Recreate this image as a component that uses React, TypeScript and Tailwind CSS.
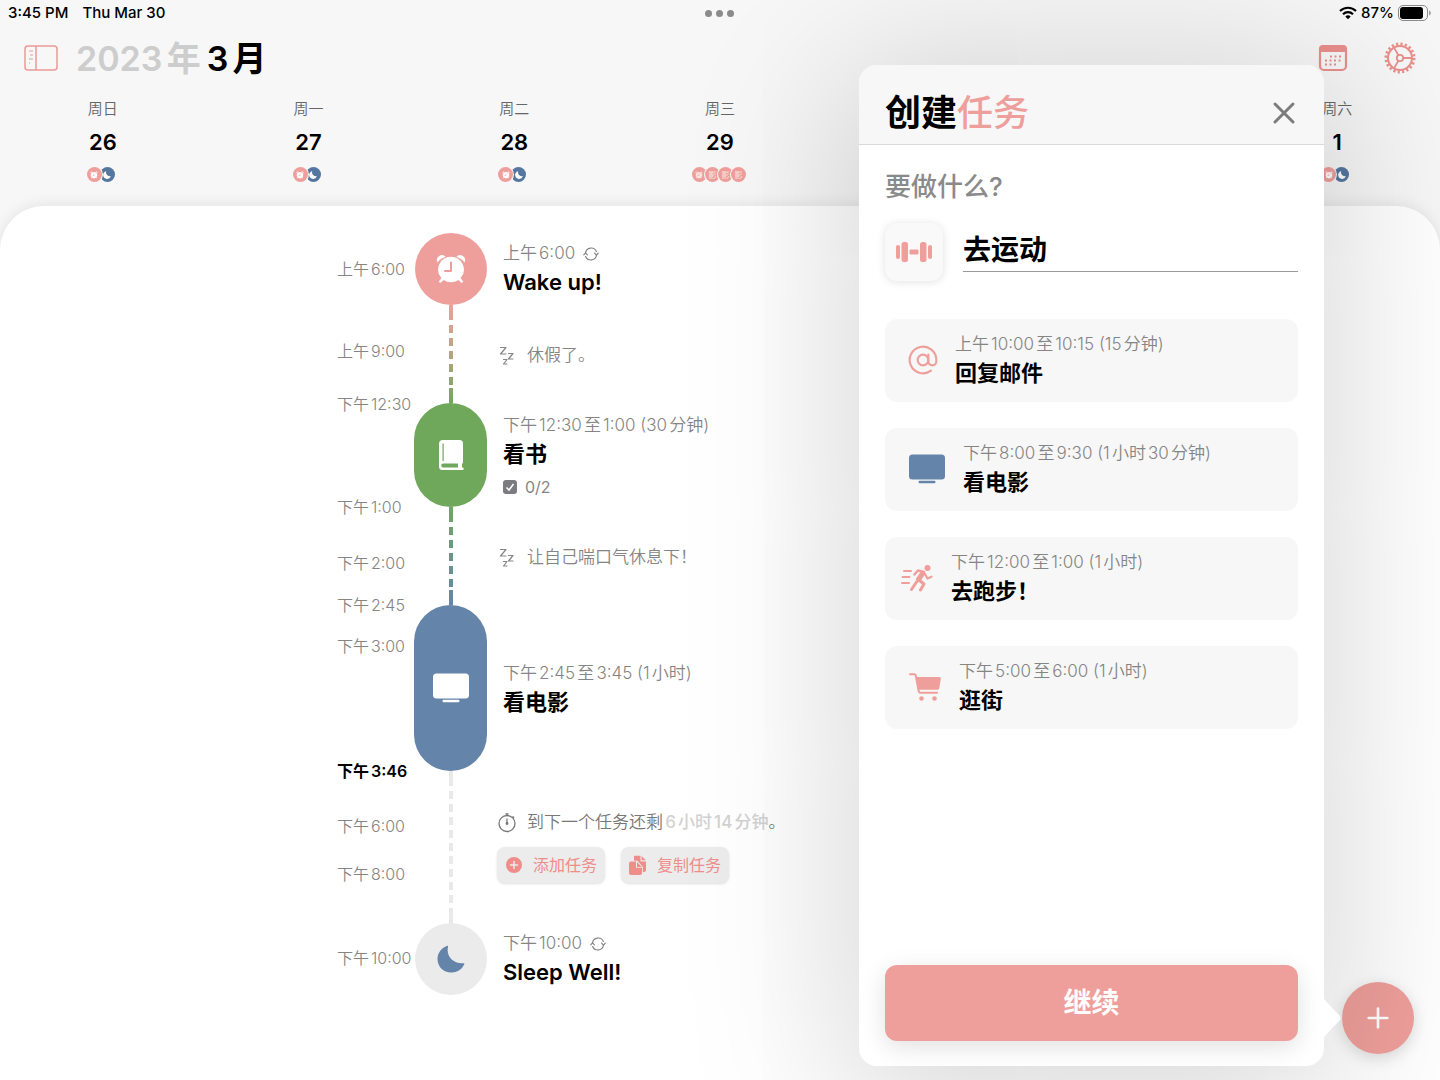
import type { ReactNode } from "react";
import { useState } from "react";
import { AtSign, Plus, X } from "lucide-react";

type IconProps = { className?: string };

function AlarmIcon({ className }: IconProps) {
  return (
    <svg viewBox="0 0 32 32" className={className} fill="currentColor" aria-hidden="true">
      <path d="M2.5 9.5a5 5 0 0 1 8.2-5.6 14 14 0 0 0-8.2 5.6zM29.5 9.5a5 5 0 0 0-8.2-5.6 14 14 0 0 1 8.2 5.6z" />
      <path
        fillRule="evenodd"
        d="M16 3.8a12.8 12.8 0 0 1 9.6 21.3l2 2.6a1.2 1.2 0 0 1-1.9 1.6l-2.2-2.4a12.8 12.8 0 0 1-15 0l-2.2 2.4a1.2 1.2 0 0 1-1.9-1.6l2-2.6A12.8 12.8 0 0 1 16 3.8zM15 9.5v7.5h-5a1 1 0 0 0 0 2h6a1 1 0 0 0 1-1V9.5a1 1 0 0 0-2 0z"
      />
    </svg>
  );
}

function BookIcon({ className }: IconProps) {
  return (
    <svg viewBox="0 0 26 32" className={className} fill="currentColor" aria-hidden="true">
      <path
        fillRule="evenodd"
        d="M5 1h16.5a3.500 3.500 0 0 1 3.500 3.500v18.500c0 .9-.5 1.500-1 2v3.500h.5a1.200 1.200 0 0 1 0 2.500H4.500A3.500 3.500 0 0 1 1 27.500V5a4 4 0 0 1 4-4zM4.500 4.500v17.500h1.200V4.500zM5.200 24.500a2 2 0 0 0 0 4H20v-4z"
      />
    </svg>
  );
}

function TvIcon({ className }: IconProps) {
  return (
    <svg viewBox="0 0 36 30" className={className} fill="currentColor" aria-hidden="true">
      <rect x="0" y="0.5" width="36" height="25" rx="3.5" />
      <rect x="9.5" y="26.8" width="17" height="2.4" rx="1.2" />
    </svg>
  );
}

function MoonIcon({ className }: IconProps) {
  return (
    <svg viewBox="0 0 28 28" className={className} fill="currentColor" aria-hidden="true">
      <path d="M10.3.8c.5-.3 1 .1.8.7-2.2 7.800 3.400 17.300 15.500 16.700.7 0 1 .5.700 1.100A13.600 13.600 0 0 1 14 27.600C6.500 27.600.5 21.600.5 14 .5 7.900 4.600 2.900 10.300.8z" />
    </svg>
  );
}

function DumbbellIcon({ className }: IconProps) {
  return (
    <svg viewBox="0 0 36 22" className={className} fill="currentColor" aria-hidden="true">
      <rect x="0" y="4" width="4" height="14" rx="2" />
      <rect x="5.5" y="1" width="6.5" height="20" rx="2.5" />
      <rect x="13.5" y="8.500" width="9" height="5" rx="1" />
      <rect x="24" y="1" width="6.5" height="20" rx="2.5" />
      <rect x="32" y="4" width="4" height="14" rx="2" />
    </svg>
  );
}

function RunIcon({ className }: IconProps) {
  return (
    <svg viewBox="0 0 32 28" className={className} fill="none" stroke="currentColor" strokeLinecap="round" strokeLinejoin="round" aria-hidden="true">
      <path d="M3 7h7M1.500 13h7M1 19h7" strokeWidth="2" />
      <circle cx="26.500" cy="4" r="3" fill="currentColor" stroke="none" />
      <path d="M13.500 10.500l3.500-4 6 1.500" strokeWidth="2.400" />
      <path d="M21.500 9.500l-4 6" strokeWidth="5" />
      <path d="M24 10l2.500 4.500 4-1.800" strokeWidth="2.200" />
      <path d="M15.500 18l-5 7.500M18.500 16.500l4.500 3.500-3.500 6" strokeWidth="3" />
    </svg>
  );
}

function CartIcon({ className }: IconProps) {
  return (
    <svg viewBox="0 0 32 28" className={className} fill="currentColor" aria-hidden="true">
      <path
        d="M1 1.200h4.500c.7 0 1 .4 1.200 1l3 16c.2 1 .8 1.600 1.800 1.600H28"
        fill="none"
        stroke="currentColor"
        strokeWidth="2"
        strokeLinecap="round"
      />
      <path d="M7.500 4h22.800c1.200 0 1.700.8 1.500 1.900l-1.500 9c-.2 1.100-.9 1.800-2 1.800H9.700z" />
      <circle cx="12.500" cy="25.500" r="2.300" />
      <circle cx="25.500" cy="25.500" r="2.300" />
    </svg>
  );
}

function RepeatIcon() {
  return (
    <svg viewBox="0 0 16 14" className="h-[14px] w-4" fill="none" stroke="currentColor" strokeWidth="1.2" strokeLinecap="round" strokeLinejoin="round" aria-hidden="true">
      <path d="M2.500 6a5.700 5.700 0 0 1 10.900-1.500M13.500 8a5.700 5.700 0 0 1-10.900 1.500" />
      <path d="M.8 7.800l1.700-2 1.900 2M11.600 6.200l1.900 2 1.700-2" />
    </svg>
  );
}

function SleepIcon() {
  return (
    <svg viewBox="0 0 16 20" className="h-5 w-4" fill="none" stroke="currentColor" strokeWidth="1.2" strokeLinecap="round" strokeLinejoin="round" aria-hidden="true">
      <path d="M1.500 1.500h5.500L1.500 8H7M9.500 7.500H14l-4.500 5.500H14M4.500 13.500H8l-3.500 4.500H8" />
    </svg>
  );
}

function StopwatchIcon() {
  return (
    <svg viewBox="0 0 20 20" className="size-5" fill="none" stroke="currentColor" strokeWidth="1.3" strokeLinecap="round" aria-hidden="true">
      <circle cx="10" cy="10.500" r="8" />
      <path d="M10 2.500V.9M9 .9h2M10 6v4.500M16 3.800l.8.8" />
      <circle cx="10" cy="10.500" r="0.800" fill="currentColor" />
    </svg>
  );
}

function SidebarIcon() {
  return (
    <svg viewBox="0 0 34 26" className="h-[26px] w-[34px]" fill="none" stroke="currentColor" strokeWidth="1.5" aria-hidden="true">
      <rect x="1" y="1" width="32" height="24" rx="3" />
      <path d="M12 1v24" />
      <path d="M5 6h4M6 10h3M5 14h4M5 18h1" strokeWidth="1.2" />
    </svg>
  );
}

function CalendarIcon() {
  return (
    <svg viewBox="0 0 30 28" className="h-7 w-[30px]" aria-hidden="true">
      <rect x="2" y="2" width="26" height="24" rx="4" fill="none" stroke="currentColor" strokeWidth="2.200" />
      <path d="M1 8V5a4 4 0 0 1 4-4h20a4 4 0 0 1 4 4v3z" fill="currentColor" />
      <path
        d="M12 12.500h12M7 16.500h17M7 20.500h13"
        stroke="currentColor"
        strokeWidth="2"
        strokeDasharray="2 2.500"
      />
    </svg>
  );
}

function GearIcon() {
  return (
    <svg viewBox="0 0 32 32" className="size-8" fill="none" stroke="currentColor" aria-hidden="true">
      <circle cx="16" cy="16" r="14" strokeWidth="3" strokeDasharray="2.199 2.199" />
      <circle cx="16" cy="16" r="12" strokeWidth="2" />
      <circle cx="16" cy="16" r="3.200" strokeWidth="1.800" />
      <path d="M19.200 16H28M14.400 13.200 10 5.600M14.400 18.800 10 26.400" strokeWidth="1.800" />
    </svg>
  );
}

function WifiIcon() {
  return (
    <svg viewBox="0 0 18 14" className="h-[14px] w-[18px]" fill="none" stroke="currentColor" strokeWidth="2.200" aria-hidden="true">
      <path d="M1 5a11.500 11.500 0 0 1 16 0" />
      <path d="M4 8.200a7.200 7.200 0 0 1 10 0" />
      <path d="M9 13.200 6.300 10.500a3.800 3.800 0 0 1 5.400 0z" fill="currentColor" stroke="none" />
    </svg>
  );
}

function BatteryIcon() {
  return (
    <svg viewBox="0 0 34 16" className="h-4 w-[34px]" aria-hidden="true">
      <rect x="0.500" y="0.500" width="29" height="15" rx="4.500" fill="none" stroke="#8a8a8a" />
      <rect x="2" y="2" width="23" height="12" rx="3" fill="black" />
      <path d="M31.200 5.500c2 .8 2 4.200 0 5z" fill="#8a8a8a" />
    </svg>
  );
}

function CopyDocIcon() {
  return (
    <svg viewBox="0 0 18 20" className="h-5 w-[18px]" fill="currentColor" aria-hidden="true">
      <path d="M5 .8h6.500v4.700c0 .6.400 1 1 1H17v8.500a2 2 0 0 1-2 2h-1.200V12L8.500 5.800H5z" />
      <path d="M12.600 1l4.200 4.300h-4.200z" />
      <path d="M2 6.500h5v5.300c0 .6.400 1 1 1h5V18a2 2 0 0 1-2 2H2a2 2 0 0 1-2-2V8.500a2 2 0 0 1 2-2z" />
      <path d="M8 7l4.700 5H8z" />
    </svg>
  );
}

function AddCircleIcon() {
  return (
    <svg viewBox="0 0 18 18" className="size-[18px]" aria-hidden="true">
      <circle cx="9" cy="9" r="8" fill="currentColor" />
      <path d="M9 5.500v7M5.500 9h7" stroke="#ececec" strokeWidth="1.500" strokeLinecap="round" />
    </svg>
  );
}

const DAYS = [
  { name: "周日", date: 26, tasks: 0 },
  { name: "周一", date: 27, tasks: 0 },
  { name: "周二", date: 28, tasks: 0 },
  { name: "周三", date: 29, tasks: 4 },
  { name: "周六", date: 1, tasks: 0, col: "col-start-7" },
];

const TIMES = [
  { label: "上午6:00", gap: "mt-[26px]" },
  { label: "上午9:00", gap: "mt-[62px]" },
  { label: "下午12:30", gap: "mt-[33px]" },
  { label: "下午1:00", gap: "mt-[83px]" },
  { label: "下午2:00", gap: "mt-[36px]" },
  { label: "下午2:45", gap: "mt-[22px]" },
  { label: "下午3:00", gap: "mt-[21px]" },
  { label: "下午3:46", gap: "mt-[105px]", now: true },
  { label: "下午6:00", gap: "mt-[35px]" },
  { label: "下午8:00", gap: "mt-[28px]" },
  { label: "下午10:00", gap: "mt-[64px]" },
];

const SUGGESTIONS: { time: string; title: string; icon: ReactNode; color: string; pad: string }[] = [
  {
    time: "上午10:00至10:15 (15分钟)",
    title: "回复邮件",
    icon: <AtSign className="size-8" strokeWidth={1.6} aria-hidden="true" />,
    color: "text-[#ef9f9b]",
    pad: "gap-4 pl-[22px]",
  },
  {
    time: "下午8:00至9:30 (1小时30分钟)",
    title: "看电影",
    icon: <TvIcon className="h-[30px] w-9" />,
    color: "text-[#6485a9]",
    pad: "gap-[18px] pl-6",
  },
  {
    time: "下午12:00至1:00 (1小时)",
    title: "去跑步！",
    icon: <RunIcon className="h-7 w-8" />,
    color: "text-[#ef9f9b]",
    pad: "gap-[18px] pl-4",
  },
  {
    time: "下午5:00至6:00 (1小时)",
    title: "逛街",
    icon: <CartIcon className="h-7 w-8" />,
    color: "text-[#ef9f9b]",
    pad: "gap-[18px] pl-6",
  },
];

function StatusBar() {
  return (
    <div className="grid h-[26px] grid-cols-3 items-center px-2 text-[15px] font-medium">
      <div className="flex gap-[14px]">
        <span>3:45 PM</span>
        <span>Thu Mar 30</span>
      </div>
      <div className="flex justify-center gap-1">
        <span className="size-[7px] rounded-full bg-[#8b8b8b]" />
        <span className="size-[7px] rounded-full bg-[#8b8b8b]" />
        <span className="size-[7px] rounded-full bg-[#8b8b8b]" />
      </div>
      <div className="flex items-center justify-end gap-1">
        <WifiIcon />
        <span>87%</span>
        <BatteryIcon />
      </div>
    </div>
  );
}

function DayDots({ tasks }: { tasks: number }) {
  if (tasks > 0) {
    return (
      <div className="flex pr-1">
        {Array.from({ length: tasks }, (_, i) => (
          <span
            key={i}
            className="-mr-[2px] flex size-[15px] items-center justify-center rounded-full bg-[#ef9f9b] text-[#fbe3e0] ring-1 ring-[#f7f7f7]"
          >
            {i === 0 ? <AlarmIcon className="size-2" /> : <span className="text-[8px] leading-none">影</span>}
          </span>
        ))}
      </div>
    );
  }
  return (
    <div className="flex pr-1">
      <span className="z-10 -mr-[2px] flex size-[15px] items-center justify-center rounded-full bg-[#ef9f9b] text-white ring-1 ring-[#f7f7f7]">
        <AlarmIcon className="size-2" />
      </span>
      <span className="flex size-[15px] items-center justify-center rounded-full bg-[#55779f] text-white">
        <MoonIcon className="size-2" />
      </span>
    </div>
  );
}

function Entry({ time, title, repeat }: { time: string; title: string; repeat?: boolean }) {
  return (
    <div>
      <p className="flex h-[26px] items-center gap-2 text-[17px] font-[350] text-[#858585]">
        {time}
        {repeat && <RepeatIcon />}
      </p>
      <h3 className="text-[22px] leading-[30px] font-semibold">{title}</h3>
    </div>
  );
}

function Timeline() {
  return (
    <div className="flex pl-[337px]">
      <ol className="w-[77px] text-base leading-5 font-[350] whitespace-nowrap text-[#858585]">
        {TIMES.map((t) => (
          <li key={t.label} className={`${t.gap} ${t.now ? "font-semibold text-black" : ""}`}>
            {t.label}
          </li>
        ))}
      </ol>

      <div className="flex w-[73px] flex-col items-center">
        <div className="flex size-[72px] items-center justify-center rounded-full bg-[#ef9f9b] text-white">
          <AlarmIcon className="size-8" />
        </div>
        <Connector className="h-[98px] from-[#ef9f9b] to-[#6fa75b]" />
        <div className="flex h-[104px] w-full items-center justify-center rounded-full bg-[#6fa75b] text-white">
          <BookIcon className="h-8 w-[26px]" />
        </div>
        <Connector className="h-[98px] from-[#6fa75b] to-[#6485a9]" />
        <div className="flex h-[166px] w-full items-center justify-center rounded-full bg-[#6485a9] text-white">
          <TvIcon className="h-[30px] w-9" />
        </div>
        <Connector className="h-[152px] from-[#e9e9e9] to-[#e9e9e9]" />
        <div className="flex size-[72px] items-center justify-center rounded-full bg-[#ebebeb] text-[#6485a9]">
          <MoonIcon className="size-7" />
        </div>
      </div>

      <div className="flex flex-col pl-4">
        <div className="h-[109px] pt-2">
          <Entry time="上午6:00" title="Wake up!" repeat />
        </div>
        <p className="-ml-1 flex h-7 items-center gap-3 text-[17px] font-[350] text-[#858585]">
          <SleepIcon />
          休假了。
        </p>
        <div className="h-[174px] pt-[43px]">
          <Entry time="下午12:30至1:00 (30分钟)" title="看书" />
          <label className="mt-1 flex h-7 items-center gap-2 text-base text-[#858585]">
            <input
              type="checkbox"
              defaultChecked
              className="size-[14px] appearance-none rounded-[3px] bg-[#7c7c80] bg-[url('data:image/svg+xml,%3Csvg%20xmlns=%22http://www.w3.org/2000/svg%22%20viewBox=%220%200%2014%2014%22%3E%3Cpath%20d=%22M3.500%207.500l2.500%202.500%204.500-6%22%20fill=%22none%22%20stroke=%22white%22%20stroke-width=%221.500%22/%3E%3C/svg%3E')]"
            />
            0/2
          </label>
        </div>
        <p className="-ml-1 flex h-7 items-center gap-3 text-[17px] font-[350] text-[#858585]">
          <SleepIcon />
          让自己喘口气休息下！
        </p>
        <div className="h-[237px] pt-[89px]">
          <Entry time="下午2:45至3:45 (1小时)" title="看电影" />
        </div>
        <div className="-ml-[6px]">
          <p className="flex h-7 items-center gap-[10px] text-[17px] font-[350] whitespace-nowrap text-[#777]">
            <StopwatchIcon />
            <span>
              到下一个任务还剩<span className="font-medium text-[#d2d2d2]">6小时14分钟</span>。
            </span>
          </p>
          <div className="mt-[10px] flex gap-4 text-base text-[#ef8d8a]">
            <button type="button" className="flex h-9 items-center gap-[10px] rounded-lg bg-[#ececec] px-2 shadow-sm">
              <AddCircleIcon />
              添加任务
            </button>
            <button type="button" className="flex h-9 items-center gap-[10px] rounded-lg bg-[#ececec] px-2 shadow-sm">
              <CopyDocIcon />
              复制任务
            </button>
          </div>
        </div>
        <div className="mt-12">
          <Entry time="下午10:00" title="Sleep Well!" repeat />
        </div>
      </div>
    </div>
  );
}

// the solid ends stay put, only the middle of the line is dashed
function Connector({ className }: { className: string }) {
  return (
    <div className={`flex w-1 flex-col bg-linear-to-b ${className}`}>
      <span className="h-[15px]" />
      <span className="flex-1 bg-[repeating-linear-gradient(white_0_5px,transparent_5px_13px)]" />
      <span className="h-[15px]" />
    </div>
  );
}

function CreateTask() {
  const [title, setTitle] = useState("去运动");

  return (
    <section
      aria-label="创建任务"
      className="absolute top-[65px] right-[116px] bottom-[14px] z-20 flex w-[465px] flex-col rounded-[18px] bg-white shadow-[0_20px_160px_16px_rgba(0,0,0,0.17)]"
    >
      <header className="flex h-20 items-center justify-between rounded-t-[18px] border-b border-[#d9d9d9] bg-[#f7f7f7] pr-[22px] pl-[26px]">
        <h2 className="pt-4 text-[36px] leading-[48px] font-semibold">
          创建<span className="font-medium text-[#ef9f9b]">任务</span>
        </h2>
        <button type="button" aria-label="关闭" className="pt-4 text-[#7b7b7b]">
          <X className="size-9" strokeWidth={2} />
        </button>
      </header>

      <div className="flex flex-1 flex-col px-[26px] pt-[22px] pb-[25px]">
        <label htmlFor="task-title" className="text-[26px] leading-10 font-medium text-[#8a8a8a]">
          要做什么?
        </label>
        <div className="mt-4 flex items-center gap-5">
          <button
            type="button"
            aria-label="图标"
            className="flex size-[58px] items-center justify-center rounded-xl bg-[#f9f9f9] text-[#ef9f9b] shadow-[0_1px_8px_rgba(0,0,0,0.12)]"
          >
            <DumbbellIcon className="h-[22px] w-9" />
          </button>
          <input
            id="task-title"
            value={title}
            onChange={(e) => setTitle(e.target.value)}
            className="mb-2 h-12 min-w-0 flex-1 border-b border-[#9a9a9a] text-[28px] font-semibold outline-none"
          />
        </div>

        <ul className="mt-[38px] flex flex-col gap-[26px]">
          {SUGGESTIONS.map((s) => (
            <li key={s.title}>
              <button type="button" className={`flex h-[83px] w-full items-center rounded-xl bg-[#f7f7f7] pb-[2px] text-left ${s.pad}`}>
                <span className={s.color}>{s.icon}</span>
                <Entry time={s.time} title={s.title} />
              </button>
            </li>
          ))}
        </ul>

        <button
          type="button"
          className="mt-auto h-[76px] rounded-xl bg-[#ef9f9b] text-[28px] font-semibold text-white shadow-[0_6px_24px_rgba(0,0,0,0.12)]"
        >
          继续
        </button>
      </div>

      <svg viewBox="0 0 18 44" className="absolute right-[-17px] bottom-[26px] h-11 w-[18px] text-white" fill="currentColor" aria-hidden="true">
        <path d="M0 0c1 3 2 4.500 4 6.500L16 19c2 2 2 4 0 6L4 37.500c-2 2-3 3.500-4 6.500z" />
      </svg>
    </section>
  );
}

export default function App() {
  return (
    <div className="relative flex min-h-screen flex-col overflow-hidden bg-[#f7f7f7] font-[Inter,'Noto_Sans_CJK_SC',sans-serif] text-black [text-autospace:normal]">
      <StatusBar />

      <header className="flex h-16 items-center justify-between px-6">
        <div className="flex items-center gap-[18px]">
          <button type="button" aria-label="侧边栏" className="text-[#ea9a98]">
            <SidebarIcon />
          </button>
          <h1 className="flex gap-[6px] text-[34px] font-semibold">
            <span className="text-[#cdcdcd]">2023年</span>
            <span>3月</span>
          </h1>
        </div>
        <div className="flex items-center gap-9 text-[#ea8f8c]">
          <button type="button" aria-label="日历">
            <CalendarIcon />
          </button>
          <button type="button" aria-label="设置">
            <GearIcon />
          </button>
        </div>
      </header>

      <div className="grid grid-cols-7 pt-[7px] pb-6">
        {DAYS.map((d) => (
          <div key={d.name} className={`flex flex-col items-center ${d.col ?? ""}`}>
            <span className="text-[15px] leading-6 font-[350] text-[#666]">{d.name}</span>
            <span className="mt-[5px] text-[22px] leading-8 font-semibold">{d.date}</span>
            <div className="mt-[9px]">
              <DayDots tasks={d.tasks} />
            </div>
          </div>
        ))}
      </div>

      <main className="flex-1 rounded-t-[44px] bg-white pt-[27px] shadow-[0_-2px_14px_rgba(0,0,0,0.08)]">
        <Timeline />
      </main>

      <CreateTask />

      <button
        type="button"
        aria-label="添加任务"
        className="absolute right-[26px] bottom-[26px] z-10 flex size-[72px] items-center justify-center rounded-full bg-[#ef9f9b] text-white shadow-[0_4px_16px_rgba(0,0,0,0.15)]"
      >
        <Plus className="size-8" strokeWidth={2} />
      </button>
    </div>
  );
}
